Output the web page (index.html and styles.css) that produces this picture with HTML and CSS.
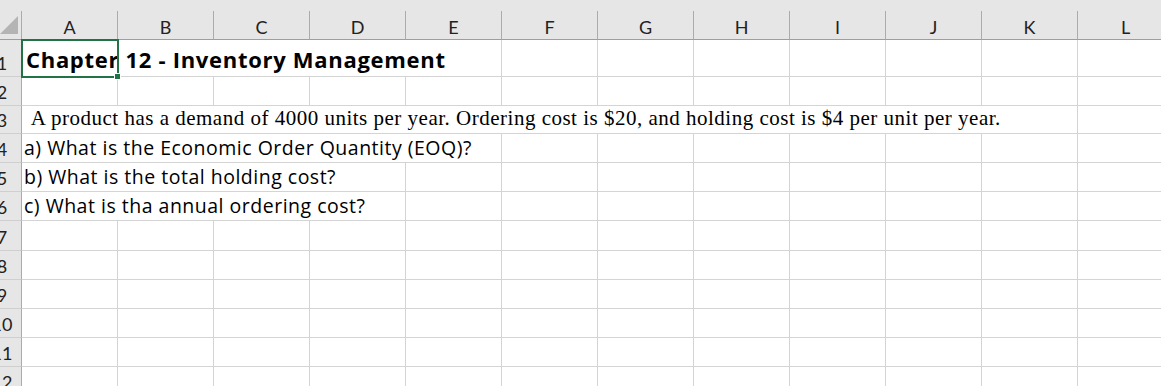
FILE: index.html
```html
<!DOCTYPE html>
<html lang="en">
<head>
    <meta charset="UTF-8">
    <title>Chapter 12 - Inventory Management</title>
    <link rel="stylesheet" href="styles.css">
</head>
<body>
    <div class="sheet" id="sheet"></div>
    <script>
        const cols = "ABCDEFGHIJKL".split("");

        // rows with text: the text cell spans the columns it runs over
        const rows = [
            { n: 1, text: "Chapter 12 - Inventory Management", span: 5, cls: "title", selected: true },
            { n: 2 },
            { n: 3, text: "\u00a0A product has a demand of 4000 units per year. Ordering cost is $20, and holding cost is $4 per unit per year.", span: 11, cls: "serif" },
            { n: 4, text: "a) What is the Economic Order Quantity (EOQ)?", span: 5 },
            { n: 5, text: "b) What is the total holding cost?", span: 4 },
            { n: 6, text: "c) What is tha annual ordering cost?", span: 4 },
            { n: 7 }, { n: 8 }, { n: 9 }, { n: 10 }, { n: 11 }, { n: 12 }
        ];

        const sheet = document.getElementById("sheet");

        function cell(cls, text) {
            const div = document.createElement("div");
            div.className = cls;
            if (text) div.textContent = text;
            sheet.appendChild(div);
            return div;
        }

        function renderSheet() {
            const corner = cell("corner");
            corner.innerHTML = `<svg width="18" height="18" viewBox="0 0 18 18"><polygon points="0,18 18,18 18,0" fill="#b4b4b4"/></svg>`;
            cols.forEach((c) => cell("col-head", c));

            rows.forEach((row) => {
                cell("row-head", String(row.n));
                let used = 0;
                if (row.text) {
                    const t = cell("cell text " + (row.cls || ""));
                    t.style.gridColumn = `span ${row.span}`;
                    t.innerHTML = `<span>${row.text}</span>`;
                    if (row.selected) {
                        t.innerHTML += `<div class="selection"></div><div class="handle"></div>`;
                    }
                    used = row.span;
                }
                for (let i = used; i < cols.length; i++) cell("cell");
            });
        }

        renderSheet();
    </script>
</body>
</html>
```

FILE: styles.css
```css
body {
    margin: 0;
    padding: 0;
    background-color: #fff;
    overflow: hidden;
    font-family: Lato, "Noto Sans", sans-serif;
}
.sheet {
    display: grid;
    grid-template-columns: 39px repeat(12, 96px);
    grid-template-rows: 29px 37px 29px 28px 29px 29px 29px 30px 29px 29px 29px 29px 29px;
    margin-left: -17px;
    padding-top: 11px;
    background-color: #e6e6e6;
    width: max-content;
}
.corner {
    display: flex;
    justify-content: flex-end;
    align-items: flex-end;
    padding: 0 3px 5px 0;
    background-color: #e6e6e6;
    border-right: 1px solid #ababab;
    border-bottom: 1px solid #9e9e9e;
    box-sizing: border-box;
}
.corner svg {
    display: block;
}
.col-head {
    display: flex;
    justify-content: center;
    align-items: center;
    padding-top: 4px;
    background-color: #e6e6e6;
    border-right: 1px solid #ababab;
    border-bottom: 1px solid #9e9e9e;
    box-sizing: border-box;
    font-size: 18px;
    color: #222;
}
.row-head {
    display: flex;
    justify-content: center;
    align-items: flex-end;
    padding-bottom: 2px;
    background-color: #e6e6e6;
    border-right: 1px solid #ababab;
    border-bottom: 1px solid #cfcfcf;
    box-sizing: border-box;
    font-size: 18px;
    color: #222;
}
.cell {
    background-color: #fff;
    border-right: 1px solid #d4d4d4;
    border-bottom: 1px solid #d4d4d4;
    box-sizing: border-box;
}
.text {
    position: relative;
    display: flex;
    align-items: flex-end;
    padding: 0 0 1px 2px;
    white-space: nowrap;
    font-family: "Open Sans", Lato, sans-serif;
    font-size: 19.5px;
    letter-spacing: 0.5px;
    color: #000;
}
.title {
    padding: 0 0 2px 4px;
    font-size: 22px;
    letter-spacing: 0.7px;
    font-weight: bold;
}
.serif {
    padding: 0 0 2px 3px;
    font-family: "Liberation Serif", serif;
    font-size: 21px;
    letter-spacing: 0.5px;
}
.selection {
    position: absolute;
    left: -1px;
    top: -1px;
    width: 98px;
    height: 39px;
    border: 2px solid #217346;
    box-sizing: border-box;
}
.handle {
    position: absolute;
    left: 92px;
    top: 33px;
    width: 5px;
    height: 5px;
    background-color: #217346;
    border: 1px solid #fff;
}
```
